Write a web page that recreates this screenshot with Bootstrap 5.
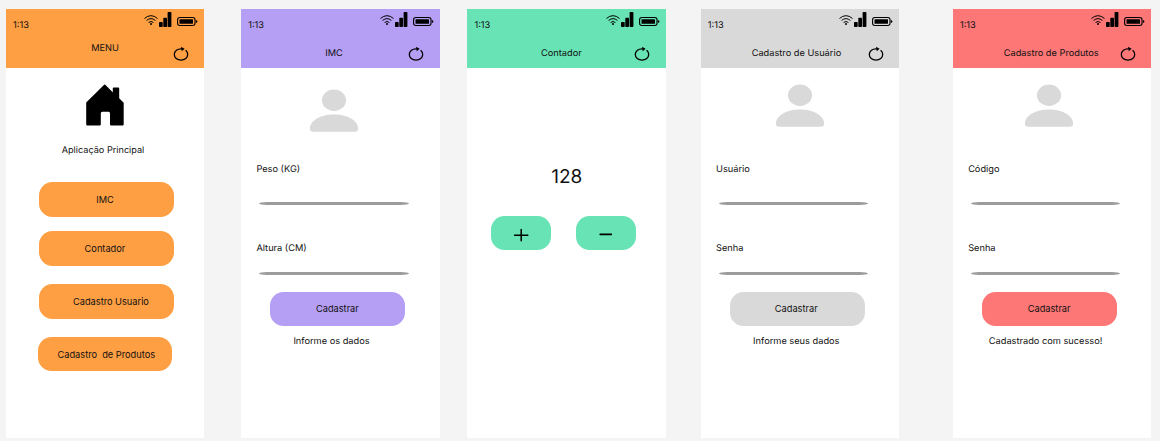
<!DOCTYPE html>
<html lang="pt-BR">
<head>
<meta charset="utf-8">
<meta name="viewport" content="width=device-width, initial-scale=1">
<title>Aplicação Principal</title>
<link href="https://cdn.jsdelivr.net/npm/bootstrap@5.3.0/dist/css/bootstrap.min.css" rel="stylesheet">
<style>
  body { background: #f4f4f4; color: #111; font-family: "Inter", sans-serif; font-size: 9.24px; line-height: 12px; text-rendering: geometricPrecision; height: 441px; overflow: hidden; }
  main { padding: 9px 0 0 6px; }
  .phone { width: 198.2px; height: 429px; background: #fff; --tint: #ff9f43; }
  .phone-imc { --tint: #b59ff4; margin-left: 37px; width: 198.8px; }
  .phone-count { --tint: #67e3b5; margin-left: 27.4px; }
  .phone-user { --tint: #d9d9d9; margin-left: 35.3px; }
  .phone-prod { --tint: #fd7777; margin-left: 53.9px; }
  .topbar { height: 59px; background: var(--tint); padding: 3px 6px 0 7px; }
  .clock { margin-top: 8px; margin-bottom: -1px; }
  .icons { width: 54px; height: 16px; }
  .reload { width: 16px; height: 16px; margin: 15px 9.5px 0 0; }
  .bar-title { margin: 16.5px 0 0 43.8px; }
  .phone-menu .bar-title { margin: 11.5px 0 0 78.2px; }
  .phone-imc .bar-title { margin-left: 77px; margin-top: 16.5px; }
  .phone-count .bar-title { margin-left: 66.7px; }
  .pill { display: block; width: 134.8px; height: 34.2px; border: 0; border-radius: 13.5px; padding: 0; background: var(--tint); color: #111; font-size: inherit; line-height: 35.6px; white-space: pre; }
  .house { width: 40px; height: 43px; margin: 16.3px 0 0 79px; }
  .app-name { margin: 17.4px 0 0 55.7px; font-size: 9.15px; }
  .menu-items { margin: 25.8px 0 0 33px; }
  .item-imc { padding-left: 57.2px; }
  .item-count { padding-left: 45.6px; margin-top: 14.8px; }
  .item-user { padding-left: 34px; margin-top: 18.7px; }
  .item-prod { padding-left: 20px; margin: 18.7px 0 0 -1.5px; }
  .avatar { width: 50px; height: 44px; margin: 15.5px 0 -.5px 74px; fill: #d9d9d9; }
  .phone-imc .avatar { margin: 20.8px 0 -5.8px 68px; }
  .phone-prod .avatar { margin-left: 71.3px; }
  .field { margin: 36.6px 0 0 15.2px; height: 43px; }
  .field + .field { margin-top: 36.6px; height: 33.6px; }
  .rule { width: 149.3px; height: 3px; background: #9c9c9c; border-radius: 8px / 50%; margin-left: 2.9px; }
  .field .rule { margin-top: 26.1px; }
  .field + .field .rule { margin-top: 17.2px; }
  .send { margin: 14.8px 0 0 29.2px; padding-left: 45.6px; line-height: 34.2px; }
  .phone-user .send { padding-left: 44.8px; }
  .note { margin: 9.9px 0 0 52.2px; }
  .phone-prod .note { margin-left: 35.9px; }
  .total { font-size: 19px; line-height: 24px; margin: 96.8px 0 0 83.8px; }
  .steps { gap: 24.5px; margin: 27.2px 0 0 23.8px; }
  .step { width: 60px; }
  .step svg { display: block; width: 60px; height: 34px; }
</style>
</head>
<body>
<svg width="0" height="0" class="position-absolute" aria-hidden="true">
  <symbol id="status" viewBox="0 0 54 16">
    <g fill="none" stroke="#000" stroke-linecap="round">
      <path stroke-width="1" d="M.8 6.2Q7 .9 13.2 6.2M2.9 8.2Q7 4.8 11.1 8.2"/>
      <path stroke-width="1" d="M4.9 10.2Q7 8.6 9.1 10.2"/>
      <rect x="33.6" y="5.5" width="17.4" height="8" rx="2.2" stroke-width="1.1"/>
    </g>
    <circle cx="7" cy="12.1" r="1"/>
    <rect x="15" y="10" width="3.7" height="5" rx=".7"/>
    <rect x="19.3" y="5.7" width="3.7" height="9.3" rx=".7"/>
    <rect x="23.6" y="0" width="3.8" height="15" rx=".8"/>
    <rect x="35.5" y="7.3" width="13.5" height="4.4" rx=".5"/>
    <path d="M51.8 7.9Q53.4 8.2 53.4 9.5T51.8 11.1Z"/>
  </symbol>
  <symbol id="reload" viewBox="0 0 16 16">
    <path fill="none" stroke="#000" stroke-width="1.3" stroke-linecap="round" d="M8.8 2.9C4.5 2.5 1.3 5 1.3 8.6C1.3 11.8 4.2 14.2 8 14.2S14.7 11.8 14.7 8.6C14.7 7 14 5.6 12.9 4.6"/>
    <path d="M8 .8L11.6 2.7L8.8 5.2Z"/>
  </symbol>
  <symbol id="person" viewBox="0 0 50 44">
    <ellipse cx="25" cy="11.2" rx="12.1" ry="10.7"/>
    <path d="M.9 39.6C.9 31.5 11.5 25.4 25 25.4S49.1 31.5 49.1 39.6Q49.1 42.8 45.8 42.8H4.2Q.9 42.8 .9 39.6Z"/>
  </symbol>
</svg>
<main class="d-flex align-items-start">
  <section class="phone phone-menu flex-shrink-0">
    <header class="topbar">
      <div class="d-flex justify-content-between align-items-start"><span class="clock">1:13</span><svg class="icons"><use href="#status"/></svg></div>
      <div class="d-flex justify-content-between align-items-start"><span class="bar-title">MENU</span><svg class="reload"><use href="#reload"/></svg></div>
    </header>
    <svg class="house d-block" viewBox="0 0 40 43"><path stroke="#000" stroke-width="1.6" stroke-linejoin="round" d="M19.7 1.3L28.6 10.2V4.3H33.4V14.6L37.9 19V40.6H25.8V29.8Q25.8 27 23.8 27H17.2Q15 27 15 29.8V40.6H2V18.8Z"/></svg>
    <div class="app-name">Aplicação Principal</div>
    <nav class="menu-items">
      <button class="btn pill text-start item-imc">IMC</button>
      <button class="btn pill text-start item-count">Contador</button>
      <button class="btn pill text-start item-user">Cadastro Usuario</button>
      <button class="btn pill text-start item-prod">Cadastro  de Produtos</button>
    </nav>
  </section>

  <section class="phone phone-imc flex-shrink-0">
    <header class="topbar">
      <div class="d-flex justify-content-between align-items-start"><span class="clock">1:13</span><svg class="icons"><use href="#status"/></svg></div>
      <div class="d-flex justify-content-between align-items-start"><span class="bar-title">IMC</span><svg class="reload"><use href="#reload"/></svg></div>
    </header>
    <svg class="avatar d-block"><use href="#person"/></svg>
    <div class="field"><div>Peso (KG)</div><div class="rule"></div></div>
    <div class="field"><div>Altura (CM)</div><div class="rule"></div></div>
    <button class="btn pill text-start send">Cadastrar</button>
    <div class="note">Informe os dados</div>
  </section>

  <section class="phone phone-count flex-shrink-0">
    <header class="topbar">
      <div class="d-flex justify-content-between align-items-start"><span class="clock">1:13</span><svg class="icons"><use href="#status"/></svg></div>
      <div class="d-flex justify-content-between align-items-start"><span class="bar-title">Contador</span><svg class="reload"><use href="#reload"/></svg></div>
    </header>
    <div class="total">128</div>
    <div class="steps d-flex">
      <button class="btn pill step" aria-label="Somar"><svg viewBox="0 0 60 34"><path stroke="#000" stroke-width="1.5" stroke-linecap="round" d="M23.6 19.2H36.8M30.2 13.5V24.7"/></svg></button>
      <button class="btn pill step" aria-label="Subtrair"><svg viewBox="0 0 60 34"><path stroke="#000" stroke-width="1.7" stroke-linecap="round" d="M24.2 18.3H35.3"/></svg></button>
    </div>
  </section>

  <section class="phone phone-user flex-shrink-0">
    <header class="topbar">
      <div class="d-flex justify-content-between align-items-start"><span class="clock">1:13</span><svg class="icons"><use href="#status"/></svg></div>
      <div class="d-flex justify-content-between align-items-start"><span class="bar-title">Cadastro de Usuário</span><svg class="reload"><use href="#reload"/></svg></div>
    </header>
    <svg class="avatar d-block"><use href="#person"/></svg>
    <div class="field"><div>Usuário</div><div class="rule"></div></div>
    <div class="field"><div>Senha</div><div class="rule"></div></div>
    <button class="btn pill text-start send">Cadastrar</button>
    <div class="note">Informe seus dados</div>
  </section>

  <section class="phone phone-prod flex-shrink-0">
    <header class="topbar">
      <div class="d-flex justify-content-between align-items-start"><span class="clock">1:13</span><svg class="icons"><use href="#status"/></svg></div>
      <div class="d-flex justify-content-between align-items-start"><span class="bar-title">Cadastro de Produtos</span><svg class="reload"><use href="#reload"/></svg></div>
    </header>
    <svg class="avatar d-block"><use href="#person"/></svg>
    <div class="field"><div>Código</div><div class="rule"></div></div>
    <div class="field"><div>Senha</div><div class="rule"></div></div>
    <button class="btn pill text-start send">Cadastrar</button>
    <div class="note">Cadastrado com sucesso!</div>
  </section>
</main>
<script src="https://cdn.jsdelivr.net/npm/bootstrap@5.3.0/dist/js/bootstrap.bundle.min.js"></script>
</body>
</html>
